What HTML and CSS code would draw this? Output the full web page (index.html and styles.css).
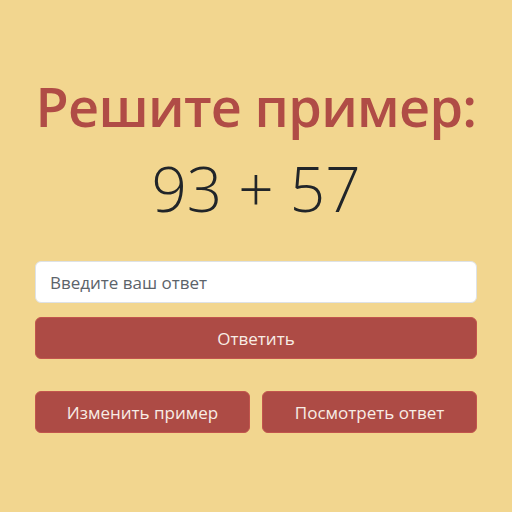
FILE: index.html
```html
<!DOCTYPE html>
<html lang="ru">
<head>
<meta charset="utf-8">
<link rel="stylesheet" href="styles.css">
</head>
<body>
<main class="app">
  <h1 class="title">Решите пример:</h1>
  <div class="task">93 + 57</div>
  <input class="answer" type="text" placeholder="Введите ваш ответ">
  <button class="btn btn-full">Ответить</button>
  <div class="actions">
    <button class="btn">Изменить пример</button>
    <button class="btn">Посмотреть ответ</button>
  </div>
</main>
</body>
</html>
```

FILE: styles.css
```css
html, body {
  margin: 0;
  padding: 0;
  background: #f2d68f;
  height: 100%;
}
body {
  font-family: "Open Sans", "Noto Sans", sans-serif;
}
.app {
  width: 442px;
  margin: 0 auto;
  padding-top: 70px;
  display: flex;
  flex-direction: column;
}
.title {
  margin: 0;
  text-align: center;
  white-space: nowrap;
  color: #b04c46;
  font-size: 54px;
  font-weight: 600;
  line-height: 72px;
  letter-spacing: -0.7px;
}
.task {
  text-align: center;
  color: #212529;
  font-size: 62px;
  font-weight: 300;
  line-height: 80px;
  margin-top: 6px;
}
.answer {
  margin-top: 33px;
  height: 42px;
  box-sizing: border-box;
  border: 1px solid #dee2e6;
  border-radius: 6px;
  padding: 0 14px;
  font-family: inherit;
  font-size: 17px;
  background: #fff;
  color: #212529;
}
.answer::placeholder {
  color: #5c636a;
}
.btn {
  height: 42px;
  border: 1px solid #c2554d;
  border-radius: 6px;
  background: #ad4b45;
  color: #f8ede6;
  font-family: inherit;
  font-size: 17px;
  padding: 0;
}
.btn-full {
  margin-top: 14px;
}
.actions {
  margin-top: 32px;
  display: grid;
  grid-template-columns: 1fr 1fr;
  gap: 12px;
}
```
